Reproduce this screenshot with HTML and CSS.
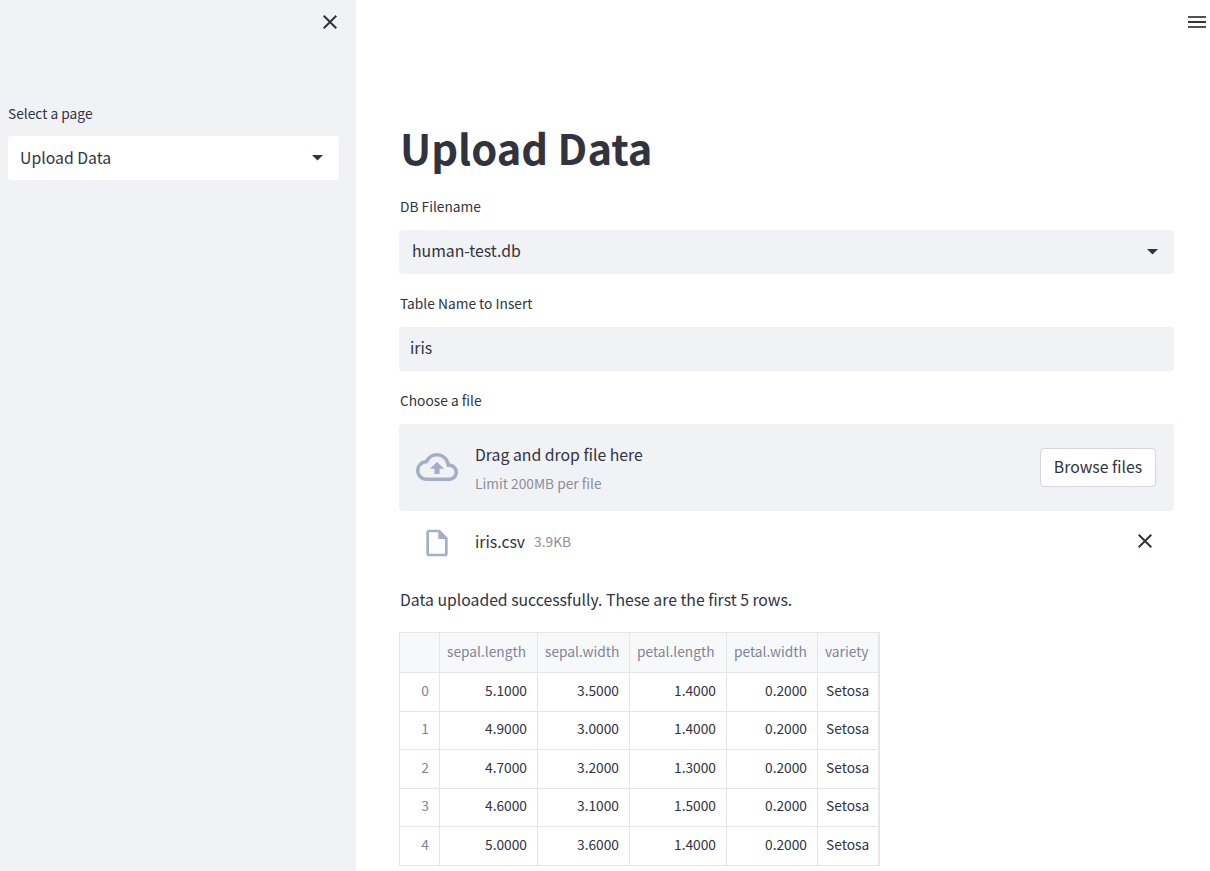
FILE: index.html
```html
<!DOCTYPE html>
<html lang="en">
<head>
<meta charset="utf-8">
<title>Upload Data</title>
<link rel="stylesheet" href="styles.css">
</head>
<body>
<div class="app">
  <aside class="sidebar">
    <div class="side-top">
      <svg class="icon-close" viewBox="0 0 24 24" width="24" height="24"><path d="M19 6.41 17.59 5 12 10.59 6.41 5 5 6.41 10.59 12 5 17.59 6.41 19 12 13.41 17.59 19 19 17.59 13.41 12z"/></svg>
    </div>
    <div class="label side-label">Select a page</div>
    <div class="select select-white">
      <span>Upload Data</span>
      <svg class="caret" viewBox="0 0 12 6" width="11" height="5.5"><path d="M0 0h12L6 6z"/></svg>
    </div>
  </aside>
  <main class="main">
    <div class="topbar">
      <svg class="hamburger" viewBox="0 0 18 12" width="18" height="12"><path class="bar-soft" d="M0 0h18v2H0zM0 10h18v2H0z"/><path d="M0 5h18v2H0z"/></svg>
    </div>
    <div class="content">
      <h1 class="title">Upload Data</h1>
      <div class="label">DB Filename</div>
      <div class="select select-grey">
        <span>human-test.db</span>
        <svg class="caret" viewBox="0 0 12 6" width="11" height="5.5"><path d="M0 0h12L6 6z"/></svg>
      </div>
      <div class="label">Table Name to Insert</div>
      <div class="input">iris</div>
      <div class="label">Choose a file</div>
      <div class="dropzone">
        <svg class="cloud" viewBox="0 0 24 24" width="42" height="42"><path d="M19.35 10.04A7.49 7.49 0 0 0 12 4C9.11 4 6.6 5.64 5.35 8.04A5.994 5.994 0 0 0 0 14c0 3.31 2.69 6 6 6h13c2.76 0 5-2.24 5-5 0-2.64-2.05-4.78-4.65-4.96zM19 18H6c-2.21 0-4-1.79-4-4 0-2.05 1.53-3.76 3.56-3.97l1.07-.11.5-.95A5.469 5.469 0 0 1 12 6c2.62 0 4.88 1.86 5.39 4.43l.3 1.5 1.53.11A2.98 2.98 0 0 1 22 15c0 1.65-1.35 3-3 3zM8 13h2.55v3h2.9v-3H16l-4-4z"/></svg>
        <div class="drop-text">
          <div class="drop-main">Drag and drop file here</div>
          <div class="drop-sub">Limit 200MB per file</div>
        </div>
        <div class="browse">Browse files</div>
      </div>
      <div class="file-row">
        <svg class="file-icon" viewBox="0 0 24 24" width="32" height="32"><path d="M14 2H6c-1.1 0-1.99.9-1.99 2L4 20c0 1.1.89 2 1.99 2H18c1.1 0 2-.9 2-2V8l-6-6zM6 20V4h7v5h5v11H6z"/></svg>
        <span class="file-name">iris.csv</span>
        <span class="file-size">3.9KB</span>
        <svg class="icon-close" viewBox="0 0 24 24" width="24" height="24"><path d="M19 6.41 17.59 5 12 10.59 6.41 5 5 6.41 10.59 12 5 17.59 6.41 19 12 13.41 17.59 19 19 17.59 13.41 12z"/></svg>
      </div>
      <p class="message">Data uploaded successfully. These are the first 5 rows.</p>
      <table class="data">
        <colgroup>
          <col class="col-idx"><col class="col-sl"><col class="col-sw"><col class="col-pl"><col class="col-pw"><col class="col-var">
        </colgroup>
        <thead>
          <tr><th class="idx"></th><th>sepal.length</th><th>sepal.width</th><th>petal.length</th><th>petal.width</th><th>variety</th></tr>
        </thead>
        <tbody>
          <tr><td class="idx">0</td><td>5.1000</td><td>3.5000</td><td>1.4000</td><td>0.2000</td><td class="txt">Setosa</td></tr>
          <tr><td class="idx">1</td><td>4.9000</td><td>3.0000</td><td>1.4000</td><td>0.2000</td><td class="txt">Setosa</td></tr>
          <tr><td class="idx">2</td><td>4.7000</td><td>3.2000</td><td>1.3000</td><td>0.2000</td><td class="txt">Setosa</td></tr>
          <tr><td class="idx">3</td><td>4.6000</td><td>3.1000</td><td>1.5000</td><td>0.2000</td><td class="txt">Setosa</td></tr>
          <tr><td class="idx">4</td><td>5.0000</td><td>3.6000</td><td>1.4000</td><td>0.2000</td><td class="txt">Setosa</td></tr>
        </tbody>
      </table>
    </div>
  </main>
</div>
</body>
</html>
```
FILE: styles.css
```css
* { box-sizing: border-box; }
html, body { margin: 0; height: 100%; overflow: hidden; }
body {
  font-family: "Noto Sans CJK JP", "Noto Sans", sans-serif;
  color: #31333f;
  background: #fff;
}
.app { display: flex; height: 871px; }
.sidebar {
  width: 356px;
  flex: none;
  background: #f0f2f6;
  padding: 0 17px 0 8px;
}
.side-top { display: flex; justify-content: flex-end; height: 104px; padding: 10px 0 0; margin-right: -3px; }
.icon-close { fill: #31333f; display: block; flex: none; }
.main { flex: 1; min-width: 0; }
.topbar { height: 16px; display: flex; justify-content: flex-end; padding: 16px 4px 0 0; }
.hamburger { fill: #31333f; display: block; flex: none; }
.bar-soft { opacity: .85; }
.content { width: 775px; margin-left: 43px; padding-top: 102px; }
.title {
  margin: 0 0 0 1px;
  font-size: 41.7px;
  line-height: 58px;
  font-weight: 700;
  height: 79px;
}
.label { font-size: 13.75px; line-height: 18px; height: 33px; margin-left: 1px; }
.side-label { margin: 0 0 8px; height: 24px; }
.select, .input {
  height: 44px;
  border-radius: 4px;
  font-size: 15.8px;
  display: flex;
  align-items: center;
  justify-content: space-between;
  margin-bottom: 20px;
  padding-bottom: 3px;
}
.select-white { background: #fff; padding-left: 12px; padding-right: 16px; padding-bottom: 1px; }
.select-white .caret { margin-top: 1px; }
.select-grey { background: #f0f2f6; padding-left: 13px; padding-right: 16px; }
.input { background: #f0f2f6; padding-left: 11px; padding-right: 11px; }
.caret { fill: #31333f; display: block; margin-top: 3px; }
.dropzone {
  height: 87px;
  background: #f0f2f6;
  border-radius: 4px;
  display: flex;
  align-items: center;
  padding: 0 18px 0 17px;
}
.cloud { fill: #a3aec7; flex: none; margin-top: -2px; }
.drop-text { margin-left: 17px; flex: 1; }
.drop-main { font-size: 15.8px; line-height: 24px; }
.drop-sub { font-size: 13.75px; line-height: 18px; color: #8d8f96; margin-top: 7px; }
.browse {
  width: 116px;
  height: 39px;
  background: #fff;
  border: 1px solid #d6d6d9;
  border-radius: 4px;
  font-size: 15.8px;
  line-height: 35px;
  text-align: center;
}
.file-row { display: flex; align-items: center; height: 60px; padding: 0 17px 0 22px; }
.file-icon { fill: #a3aec7; flex: none; margin-top: 4px; }
.file-name { font-size: 15.8px; margin-left: 22px; }
.file-size { font-size: 13.75px; color: #8d8f96; margin-left: 9px; flex: 1; }
.message { margin: 17px 0 0 1px; font-size: 15.75px; line-height: 24px; height: 44px; }
.data {
  border-collapse: collapse;
  table-layout: fixed;
  width: 479px;
  font-size: 13.75px;
  border-right: 2px solid #e6e6e8;
}
.col-idx { width: 40px; }
.col-sl { width: 98px; }
.col-sw { width: 92px; }
.col-pl { width: 97px; }
.col-pw { width: 91px; }
.col-var { width: 61px; }
.data th, .data td {
  border: 1px solid #e6e6e8;
  padding: 0 10px 4px 7px;
  height: 38.5px;
  line-height: 20px;
  text-align: right;
  font-weight: 400;
  white-space: nowrap;
}
.data th { height: 40px; background: #f7f8fa; color: #808495; text-align: left; }
.data td.idx { color: #808495; }
.data td.txt { text-align: left; padding-left: 8px; padding-right: 0; }
```
